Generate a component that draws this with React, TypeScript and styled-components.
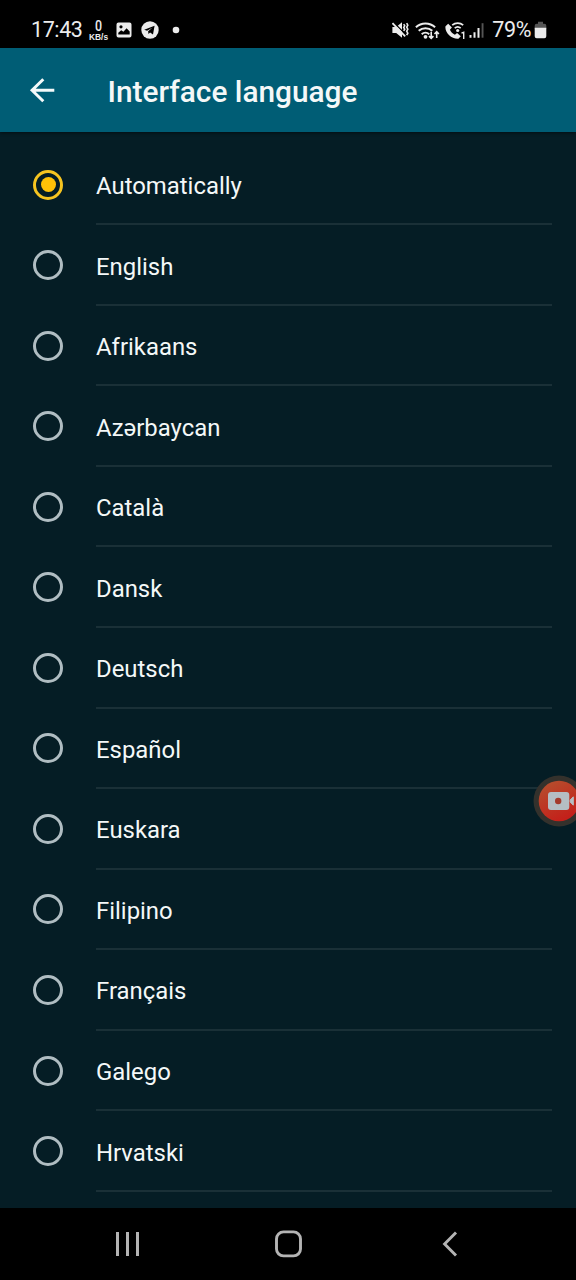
import React from "react";
import styled, { createGlobalStyle } from "styled-components";

const GlobalStyle = createGlobalStyle`
  * { box-sizing: border-box; }
  body { margin: 0; background: #051d25; }
`;

const Screen = styled.div`
  position: relative;
  display: flex;
  flex-direction: column;
  width: 576px;
  height: 1280px;
  overflow: hidden;
  background: #051d25;
  color: #f4f8f8;
  font-family: Roboto, "Noto Sans", sans-serif;
`;

const StatusBar = styled.header`
  flex: none;
  display: flex;
  justify-content: space-between;
  height: 48px;
  padding: 12px 29.5px 0 31px;
  background: #000;
  color: #ececec;
`;

const StatusGroup = styled.div`
  display: flex;
  align-items: center;
  height: 36px;
`;

const StatusText = styled.span<{ $gap?: number }>`
  margin-left: ${({ $gap = 0 }) => $gap}px;
  font-size: 21.5px;
  letter-spacing: -0.4px;
  line-height: 36px;
  white-space: nowrap;
`;

const NetworkSpeed = styled.div`
  display: flex;
  flex-direction: column;
  align-items: center;
  width: 20px;
  margin: 0 7.5px 0 6px;
`;

const SpeedValue = styled.span`
  font-size: 15.5px;
  font-weight: 500;
  line-height: 13px;
  transform: scaleX(0.8);
`;

const SpeedUnit = styled.span`
  font-family: "Liberation Sans", sans-serif;
  font-size: 8.4px;
  font-weight: 700;
  line-height: 8px;
`;

const Icon = styled.svg<{ $gap?: number }>`
  display: block;
  flex: none;
  margin-left: ${({ $gap = 0 }) => $gap}px;
`;

const AppBar = styled.div`
  flex: none;
  display: flex;
  align-items: center;
  height: 84px;
  padding-left: 26px;
  background: #005d75;
  box-shadow: 0 1px 3px rgba(0, 0, 0, 0.5);
`;

const BackButton = styled.button`
  display: flex;
  width: 32px;
  padding: 0;
  border: 0;
  background: none;
  color: #f4fafa;
`;

const Title = styled.h1`
  margin: 3px 0 0 49.6px;
  font-size: 29.8px;
  font-weight: 500;
  line-height: 36px;
  white-space: nowrap;
`;

const LanguageList = styled.ul`
  flex: 1;
  min-height: 0;
  margin: 0;
  padding: 12.8px 24px 0 33px;
  overflow: hidden;
  list-style: none;
`;

const LanguageRow = styled.li`
  display: flex;
  align-items: stretch;
  height: 80.54px;
`;

const RadioCell = styled.span`
  display: flex;
  align-items: center;
  width: 63px;
  padding-bottom: 0.8px;
`;

const Radio = styled.span<{ $selected: boolean }>`
  display: flex;
  align-items: center;
  justify-content: center;
  width: 30px;
  height: 30px;
  border: 3px solid ${({ $selected }) => ($selected ? "#f6c420" : "#b0bdc2")};
  border-radius: 50%;

  &::after {
    content: "";
    width: 15px;
    height: 15px;
    border-radius: 50%;
    background: ${({ $selected }) => ($selected ? "#ffc107" : "transparent")};
  }
`;

const LanguageName = styled.span`
  flex: 1;
  display: flex;
  align-items: center;
  padding-top: 4.2px;
  border-bottom: 2px solid #1a3037;
  font-size: 23.9px;
  line-height: 30px;
`;

const NavigationBar = styled.nav`
  flex: none;
  display: flex;
  justify-content: center;
  align-items: center;
  gap: 129px;
  height: 72px;
  background: #000;
`;

const NavButton = styled.button`
  display: flex;
  padding: 0;
  border: 0;
  background: none;
  color: #b4b4b4;
`;

const RecorderButton = styled.button`
  position: absolute;
  top: 775px;
  right: -9px;
  display: flex;
  padding: 0;
  border: 0;
  background: none;
`;

const languages = [
  "Automatically", "English", "Afrikaans", "Azərbaycan", "Català", "Dansk",
  "Deutsch", "Español", "Euskara", "Filipino", "Français", "Galego", "Hrvatski",
];

const PictureIcon = () => (
  <Icon width="16" height="16" viewBox="0 0 16 16">
    <path fillRule="evenodd" fill="currentColor" d="M2.5.5h11a2 2 0 0 1 2 2v11a2 2 0 0 1-2 2h-11a2 2 0 0 1-2-2v-11a2 2 0 0 1 2-2ZM2.3 12.6h11.4V9.6L10.6 6.2 7.4 9.8 5.2 8.2 2.3 10.8ZM5 3.2a1.6 1.6 0 1 0 0 3.2 1.6 1.6 0 0 0 0-3.2Z" />
  </Icon>
);

const TelegramIcon = () => (
  <Icon $gap={8.5} width="18" height="18" viewBox="0 0 18 18">
    <circle cx="9" cy="9" r="8.7" fill="currentColor" />
    <path fill="#000" d="M3.2 8.8 13.6 4.7 12 13.5 9.1 11.5 7.5 13 7.1 10.3 11.6 6.4 6.1 9.8Z" />
  </Icon>
);

const DotIcon = () => (
  <Icon $gap={13} width="8" height="8" viewBox="0 0 8 8">
    <circle cx="4" cy="4" r="3.3" fill="currentColor" />
  </Icon>
);

const MuteIcon = () => (
  <Icon width="17" height="18" viewBox="0 0 17 18">
    <path fill="currentColor" d="M.4 6h3.8L10 1.2v15.5L4.2 12H.4Z" />
    <path d="m1.4 1.2 13 13" stroke="#000" strokeWidth="1.3" />
    <path d="m.5 2.1 12.7 13.2" stroke="currentColor" strokeWidth="1.8" />
    <path d="m11.7 3.2 1 1.6-1 1.7 1 1.7-1 1.7m3-7.7 1.1 2-1.1 2 1.1 2-1.1 2 1.1 2-1.1 2" fill="none" stroke="currentColor" strokeWidth="1.6" />
  </Icon>
);

const WifiIcon = () => (
  <Icon $gap={6} width="25" height="19" viewBox="0 0 25 19">
    <g fill="none" stroke="currentColor" strokeWidth="2">
      <path d="M.9 6.3a14 14 0 0 1 19.2 0M3.7 9.8a10 10 0 0 1 13.6 0M6.7 13.2a5.6 5.6 0 0 1 7.5 0" />
      <path strokeWidth="1.6" d="M16.2 10.8v6.6m-2.2-2.3 2.2 2.3 2.2-2.3M21.7 17v-6.3m-2.2 2.3 2.2-2.3 2.2 2.3" />
    </g>
    <circle cx="10.5" cy="15.8" r="1.9" fill="currentColor" />
  </Icon>
);

const CallIcon = () => (
  <Icon $gap={5} width="21" height="19" viewBox="0 0 21 19">
    <path fill="currentColor" d="M3.2 2.7 6.9 6.4 4.9 8.8c1 2.3 2.7 4 5 5l2.2-1.9 3.7 3.4-2.4 2.5C6.3 18.3-.6 11.3.5 5.2Z" />
    <path fill="none" stroke="currentColor" strokeWidth="1.7" d="M7.2 4.2a8.2 8.2 0 0 1 11 0M9.7 7.2a4.6 4.6 0 0 1 6 0" />
    <circle cx="12.7" cy="9.5" r="1.6" fill="currentColor" />
    <path fill="none" stroke="currentColor" strokeWidth="1.4" d="m16.5 12.2 2.2-.9V18" />
  </Icon>
);

const SignalIcon = () => (
  <Icon $gap={3.5} width="16" height="17" viewBox="0 0 16 17">
    <path fill="currentColor" d="M.5 13h2v2.7h-2zM4.5 10.2h2v5.5h-2zM8.5 6h2v9.7h-2z" />
    <path fill="#555" d="M12.6 1.2h1.9v14.5h-1.9z" />
  </Icon>
);

const BatteryIcon = () => (
  <Icon $gap={2.5} width="13" height="18" viewBox="0 0 13 18">
    <path fill="#555" d="M4 .8h5v2h1.3a2 2 0 0 1 2 2v3H.7v-3a2 2 0 0 1 2-2H4Z" />
    <path fill="currentColor" d="M.7 6.8h11.6v8.5a2 2 0 0 1-2 2H2.7a2 2 0 0 1-2-2Z" />
  </Icon>
);

export default function App() {
  return (
    <>
      <GlobalStyle />
      <Screen>
        <StatusBar>
          <StatusGroup>
            <StatusText>17:43</StatusText>
            <NetworkSpeed>
              <SpeedValue>0</SpeedValue>
              <SpeedUnit>KB/s</SpeedUnit>
            </NetworkSpeed>
            <PictureIcon />
            <TelegramIcon />
            <DotIcon />
          </StatusGroup>
          <StatusGroup>
            <MuteIcon />
            <WifiIcon />
            <CallIcon />
            <SignalIcon />
            <StatusText $gap={7}>79%</StatusText>
            <BatteryIcon />
          </StatusGroup>
        </StatusBar>

        <AppBar>
          <BackButton aria-label="Back">
            <Icon width="32" height="32" viewBox="0 0 32 32">
              <path d="M28.3 16.2H6M17.3 5.2l-11.2 11 11.2 11" fill="none" stroke="currentColor" strokeWidth="3" />
            </Icon>
          </BackButton>
          <Title>Interface language</Title>
        </AppBar>

        <LanguageList>
          {languages.map((name, index) => (
            <LanguageRow key={name}>
              <RadioCell>
                <Radio $selected={index === 0} />
              </RadioCell>
              <LanguageName>{name}</LanguageName>
            </LanguageRow>
          ))}
        </LanguageList>

        <NavigationBar>
          <NavButton aria-label="Recent apps">
            <Icon width="32" height="32" viewBox="0 0 32 32">
              <path d="M6.5 4v24M16.5 4v24M26.5 4v24" stroke="currentColor" strokeWidth="3" />
            </Icon>
          </NavButton>
          <NavButton aria-label="Home">
            <Icon width="32" height="32" viewBox="0 0 32 32">
              <rect x="4.5" y="3.9" width="24" height="24" rx="7" fill="none" stroke="currentColor" strokeWidth="2.9" />
            </Icon>
          </NavButton>
          <NavButton aria-label="Back">
            <Icon width="32" height="32" viewBox="0 0 32 32">
              <path d="M23 4.5 11.6 16 23 27.5" fill="none" stroke="currentColor" strokeWidth="2.9" />
            </Icon>
          </NavButton>
        </NavigationBar>

        <RecorderButton aria-label="Record">
          <Icon width="52" height="52" viewBox="0 0 52 52">
            <defs>
              <linearGradient id="record" x1="0" y1="0" x2="0.5" y2="1">
                <stop offset="0" stopColor="#b4532f" />
                <stop offset="1" stopColor="#c4201a" />
              </linearGradient>
            </defs>
            <circle cx="26" cy="26" r="25.5" fill="#34312c" />
            <circle cx="26" cy="26" r="20.3" fill="url(#record)" />
            <rect x="15" y="17" width="21.3" height="18" rx="3" fill="#b5bec3" />
            <path d="m37.2 25 3.1-3.2v8.4L37.2 27Z" fill="#b5bec3" stroke="#b5bec3" strokeLinejoin="round" />
            <circle cx="25.2" cy="26" r="3.2" fill="#a43a2b" />
          </Icon>
        </RecorderButton>
      </Screen>
    </>
  );
}
